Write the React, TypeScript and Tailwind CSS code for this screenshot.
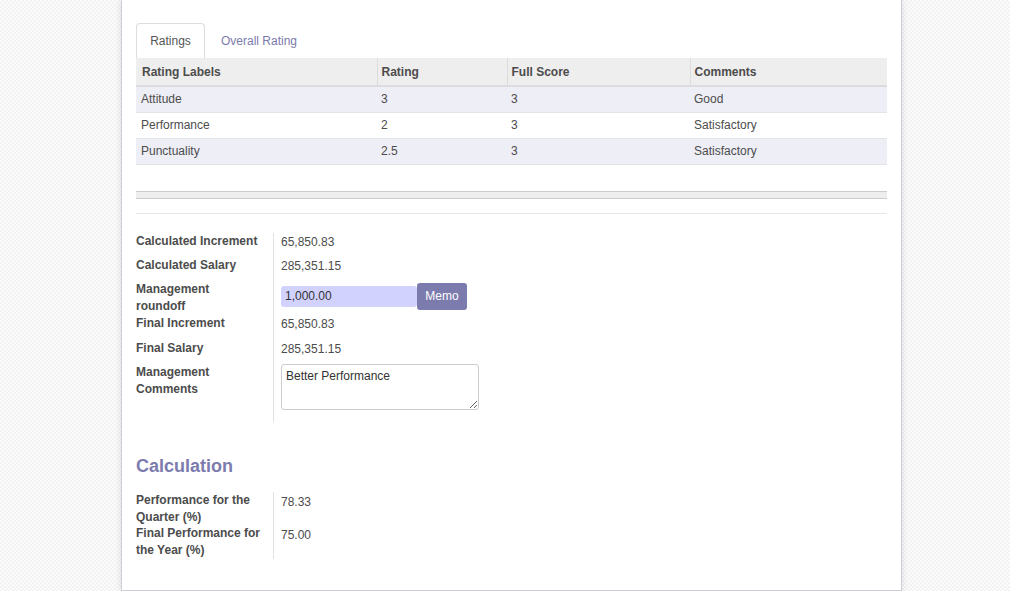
import React from 'react';

const ratings = [
  { label: 'Attitude', rating: '3', full: '3', comment: 'Good' },
  { label: 'Performance', rating: '2', full: '3', comment: 'Satisfactory' },
  { label: 'Punctuality', rating: '2.5', full: '3', comment: 'Satisfactory' },
];

function Row({ label, h, children, vpt = 'pt-[1px]' }: { label: React.ReactNode; h: string; children: React.ReactNode; vpt?: string }) {
  return (
    <div className={`flex ${h}`}>
      <div className="w-[137px] shrink-0 whitespace-nowrap pr-[8px] font-bold leading-[17px] text-[#4c4c4c]">{label}</div>
      <div className={`flex-1 border-l border-[#e2e2e2] pl-[7px] leading-[17px] ${vpt}`}>{children}</div>
    </div>
  );
}

export default function App() {
  return (
    <div
      className="h-[591px] w-full overflow-hidden bg-[#f8f8f8] bg-[repeating-conic-gradient(#f2f2f2_0_25%,#fbfbfb_0_50%)] bg-size-[4px_4px] text-[12px] text-[#4c4c4c]"
      style={{ fontFamily: '"Liberation Sans", Arial, sans-serif' }}
    >
      <div className="ml-[121px] h-[591px] w-[781px] border-x border-b border-[#cfcdd9] bg-white px-[14px] pt-[23px] shadow-[0_0_6px_rgba(0,0,0,0.12)]">
        {/* tabs */}
        <div className="flex h-[35px] items-end">
          <div className="flex h-[35px] w-[69px] items-center justify-center rounded-t-[4px] border border-b-0 border-[#dddddd] bg-white text-[#555]">
            Ratings
          </div>
          <div className="flex h-[35px] items-center pl-[16px] text-[#7c7bad]">Overall Rating</div>
        </div>

        {/* ratings table */}
        <table className="w-[751px] table-fixed border-collapse">
          <colgroup>
            <col className="w-[241px]" />
            <col className="w-[130px]" />
            <col className="w-[183px]" />
            <col className="w-[197px]" />
          </colgroup>
          <thead>
            <tr className="h-[28px] border-b-2 border-[#dcdcdc] bg-[#eeeeee] text-left font-bold">
              <th className="px-[6px]">Rating Labels</th>
              <th className="border-l border-[#dcdcdc] px-[4px]">Rating</th>
              <th className="border-l border-[#dcdcdc] px-[4px]">Full Score</th>
              <th className="border-l border-[#dcdcdc] px-[4px]">Comments</th>
            </tr>
          </thead>
          <tbody>
            {ratings.map((r, i) => (
              <tr key={r.label} className={`h-[26px] border-b border-[#e4e4e4] ${i % 2 === 0 ? 'bg-[#eeeef7]' : 'bg-white'}`}>
                <td className="px-[5px]">{r.label}</td>
                <td className="px-[4px]">{r.rating}</td>
                <td className="px-[4px]">{r.full}</td>
                <td className="px-[4px]">{r.comment}</td>
              </tr>
            ))}
          </tbody>
        </table>

        {/* table footer */}
        <div className="mt-[26px] h-[8px] border-y border-[#cccccc] bg-[#eeeeee]" />
        <div className="mt-[14px] h-px bg-[#e6e6e6]" />

        {/* salary group */}
        <div className="mt-[19px]">
          <Row label="Calculated Increment" h="h-[24px]">65,850.83</Row>
          <Row label="Calculated Salary" h="h-[24px]">285,351.15</Row>
          <Row label={<>Management<br />roundoff</>} h="h-[34px]" vpt="pt-[2px]">
            <div className="flex items-center">
              <input
                readOnly
                value="1,000.00"
                className="h-[21px] w-[136px] rounded-[3px] bg-[#d2d2ff] px-[4px] text-[12px] text-[#333] outline-none"
              />
              <button className="h-[27px] w-[50px] rounded-[3px] bg-[#7c7bad] text-[12px] text-white">Memo</button>
            </div>
          </Row>
          <Row label="Final Increment" h="h-[25px]">65,850.83</Row>
          <Row label="Final Salary" h="h-[24px]">285,351.15</Row>
          <Row label={<>Management<br />Comments</>} h="h-[58px]" vpt="pt-[0px]">
            <textarea
              readOnly
              value="Better Performance"
              className="h-[46px] w-[198px] rounded-[3px] border border-[#cccccc] px-[4px] py-[3px] text-[12px] leading-[16px] text-[#333] outline-none"
            />
          </Row>
        </div>

        <h2 className="mt-[33px] text-[18px] font-bold leading-[22px] text-[#7c7bad]">Calculation</h2>

        <div className="mt-[15px]">
          <Row label={<>Performance for the<br />Quarter (%)</>} h="h-[33px]" vpt="pt-[2px]">78.33</Row>
          <Row label={<>Final Performance for<br />the Year (%)</>} h="h-[34px]" vpt="pt-[2px]">75.00</Row>
        </div>
      </div>
    </div>
  );
}
